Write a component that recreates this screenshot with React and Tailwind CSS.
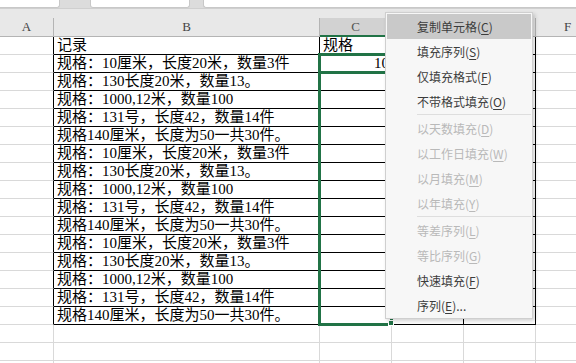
import React from "react";

const sheetFont = { fontFamily: '"Liberation Serif", "Noto Sans CJK SC", serif' };
const menuFont = { fontFamily: '"Noto Sans CJK SC", sans-serif' };

const data = [
  ["记录", "规格"],
  ["规格：10厘米，长度20米，数量3件", "10"],
  ["规格：130长度20米，数量13。", ""],
  ["规格：1000,12米，数量100", ""],
  ["规格：131号，长度42，数量14件", ""],
  ["规格140厘米，长度为50一共30件。", ""],
  ["规格：10厘米，长度20米，数量3件", ""],
  ["规格：130长度20米，数量13。", ""],
  ["规格：1000,12米，数量100", ""],
  ["规格：131号，长度42，数量14件", ""],
  ["规格140厘米，长度为50一共30件。", ""],
  ["规格：10厘米，长度20米，数量3件", ""],
  ["规格：130长度20米，数量13。", ""],
  ["规格：1000,12米，数量100", ""],
  ["规格：131号，长度42，数量14件", ""],
  ["规格140厘米，长度为50一共30件。", ""],
];

function TableRow({ b, c, idx }) {
  return (
    <div className="flex h-[18px] shrink-0 text-[15px] leading-[17px] text-black" style={sheetFont}>
      <div className="w-[54px] shrink-0 border-r border-b border-r-black border-b-[#d9d9d9]" />
      <div className="w-[266px] shrink-0 border-r border-b border-black pl-[3px] whitespace-nowrap overflow-hidden flex items-center">
        {b}
      </div>
      <div
        className={
          "w-[72px] shrink-0 border-r border-b border-black whitespace-nowrap overflow-hidden flex items-center " +
          (idx === 1 ? "justify-end pr-[2px]" : "pl-[3px]")
        }
      >
        {c}
      </div>
      <div className="w-[72px] shrink-0 border-r border-b border-black" />
      <div className="w-[72px] shrink-0 border-r border-b border-black" />
      <div className="w-[64px] shrink-0 border-r border-b border-[#d9d9d9]" />
    </div>
  );
}

function EmptyRow() {
  return (
    <div className="flex h-[18px] shrink-0">
      <div className="w-[54px] shrink-0 border-r border-b border-[#d9d9d9]" />
      <div className="w-[266px] shrink-0 border-r border-b border-[#d9d9d9]" />
      <div className="w-[72px] shrink-0 border-r border-b border-[#d9d9d9]" />
      <div className="w-[72px] shrink-0 border-r border-b border-[#d9d9d9]" />
      <div className="w-[72px] shrink-0 border-r border-b border-[#d9d9d9]" />
      <div className="w-[64px] shrink-0 border-r border-b border-[#d9d9d9]" />
    </div>
  );
}

function Item({ label, k, tail = "", disabled, active }) {
  return (
    <div
      className={
        "h-[25px] mx-[1px] flex items-center pl-[30px] text-[12px] whitespace-nowrap " +
        (active ? "bg-[#c9c9c9] " : "") +
        (disabled ? "text-[#b9b9b9]" : "text-[#3c3c3c]")
      }
    >
      {label}(<span className="underline underline-offset-2">{k}</span>){tail}
    </div>
  );
}

function Sep() {
  return (
    <div className="h-[2px] flex pl-[31px] pr-[1px]">
      <div className="h-px flex-1 bg-[#dedede]" />
    </div>
  );
}

export default function App() {
  return (
    <div className="relative w-[576px] h-[363px] overflow-hidden bg-white">
      {/* top strip */}
      <div className="flex h-[9px] bg-[#dcdcdc] border-b border-[#cfcfcf]">
        <div className="w-[60px] shrink-0 bg-white border-r border-b border-[#c8c8c8] rounded-br-[3px]" />
        <div className="w-[30px] shrink-0" />
        <div className="w-[100px] shrink-0 bg-white border border-t-0 border-[#c8c8c8] rounded-b-[3px]" />
        <div className="w-[13px] shrink-0" />
        <div className="flex-1 bg-white border-l border-b border-[#c8c8c8] rounded-bl-[3px]" />
      </div>
      {/* band */}
      <div className="h-[9px] bg-[#e8e8e8]" />
      {/* column headers */}
      <div className="flex h-[19px] bg-[#e8e8e8] text-[13px] text-[#444]" style={sheetFont}>
        <div className="w-[54px] shrink-0 border-r border-b border-[#b4b4b4] flex items-center justify-center">A</div>
        <div className="w-[266px] shrink-0 border-r border-b border-[#b4b4b4] flex items-center justify-center">B</div>
        <div className="w-[72px] shrink-0 bg-[#d2d2d2] border-r border-r-[#b4b4b4] border-b-2 border-b-[#217346] flex items-center justify-center text-[#555]">C</div>
        <div className="w-[72px] shrink-0 border-r border-b border-[#b4b4b4] flex items-center justify-center">D</div>
        <div className="w-[72px] shrink-0 border-r border-b border-[#b4b4b4] flex items-center justify-center">E</div>
        <div className="w-[64px] shrink-0 border-r border-b border-[#b4b4b4] flex items-center justify-center">F</div>
      </div>
      {/* rows */}
      <div className="flex flex-col">
        {data.map((r, i) => (
          <TableRow key={i} b={r[0]} c={r[1]} idx={i} />
        ))}
        <EmptyRow />
        <EmptyRow />
        <EmptyRow />
      </div>

      {/* selection range */}
      <div className="absolute left-[318px] top-[53px] w-[75px] h-[273px] border-[3px] border-[#217346]" />
      <div className="absolute left-[318px] top-[53px] w-[75px] h-[21px] border-[3px] border-[#217346]" />
      <div className="absolute left-[388px] top-[320px] w-[6px] h-[6px] bg-[#217346] border border-white" />

      {/* context menu */}
      <div
        className="absolute left-[385px] top-[12px] w-[148px] h-[307px] bg-[#f7f7f7] border border-[#cfcfcf] pt-px shadow-[2px_2px_4px_rgba(0,0,0,0.18)] z-10"
        style={menuFont}
      >
        <Item label="复制单元格" k="C" active />
        <Item label="填充序列" k="S" />
        <Item label="仅填充格式" k="F" />
        <Item label="不带格式填充" k="O" />
        <Sep />
        <Item label="以天数填充" k="D" disabled />
        <Item label="以工作日填充" k="W" disabled />
        <Item label="以月填充" k="M" disabled />
        <Item label="以年填充" k="Y" disabled />
        <Sep />
        <Item label="等差序列" k="L" disabled />
        <Item label="等比序列" k="G" disabled />
        <Item label="快速填充" k="F" />
        <Item label="序列" k="E" tail="..." />
      </div>
    </div>
  );
}
